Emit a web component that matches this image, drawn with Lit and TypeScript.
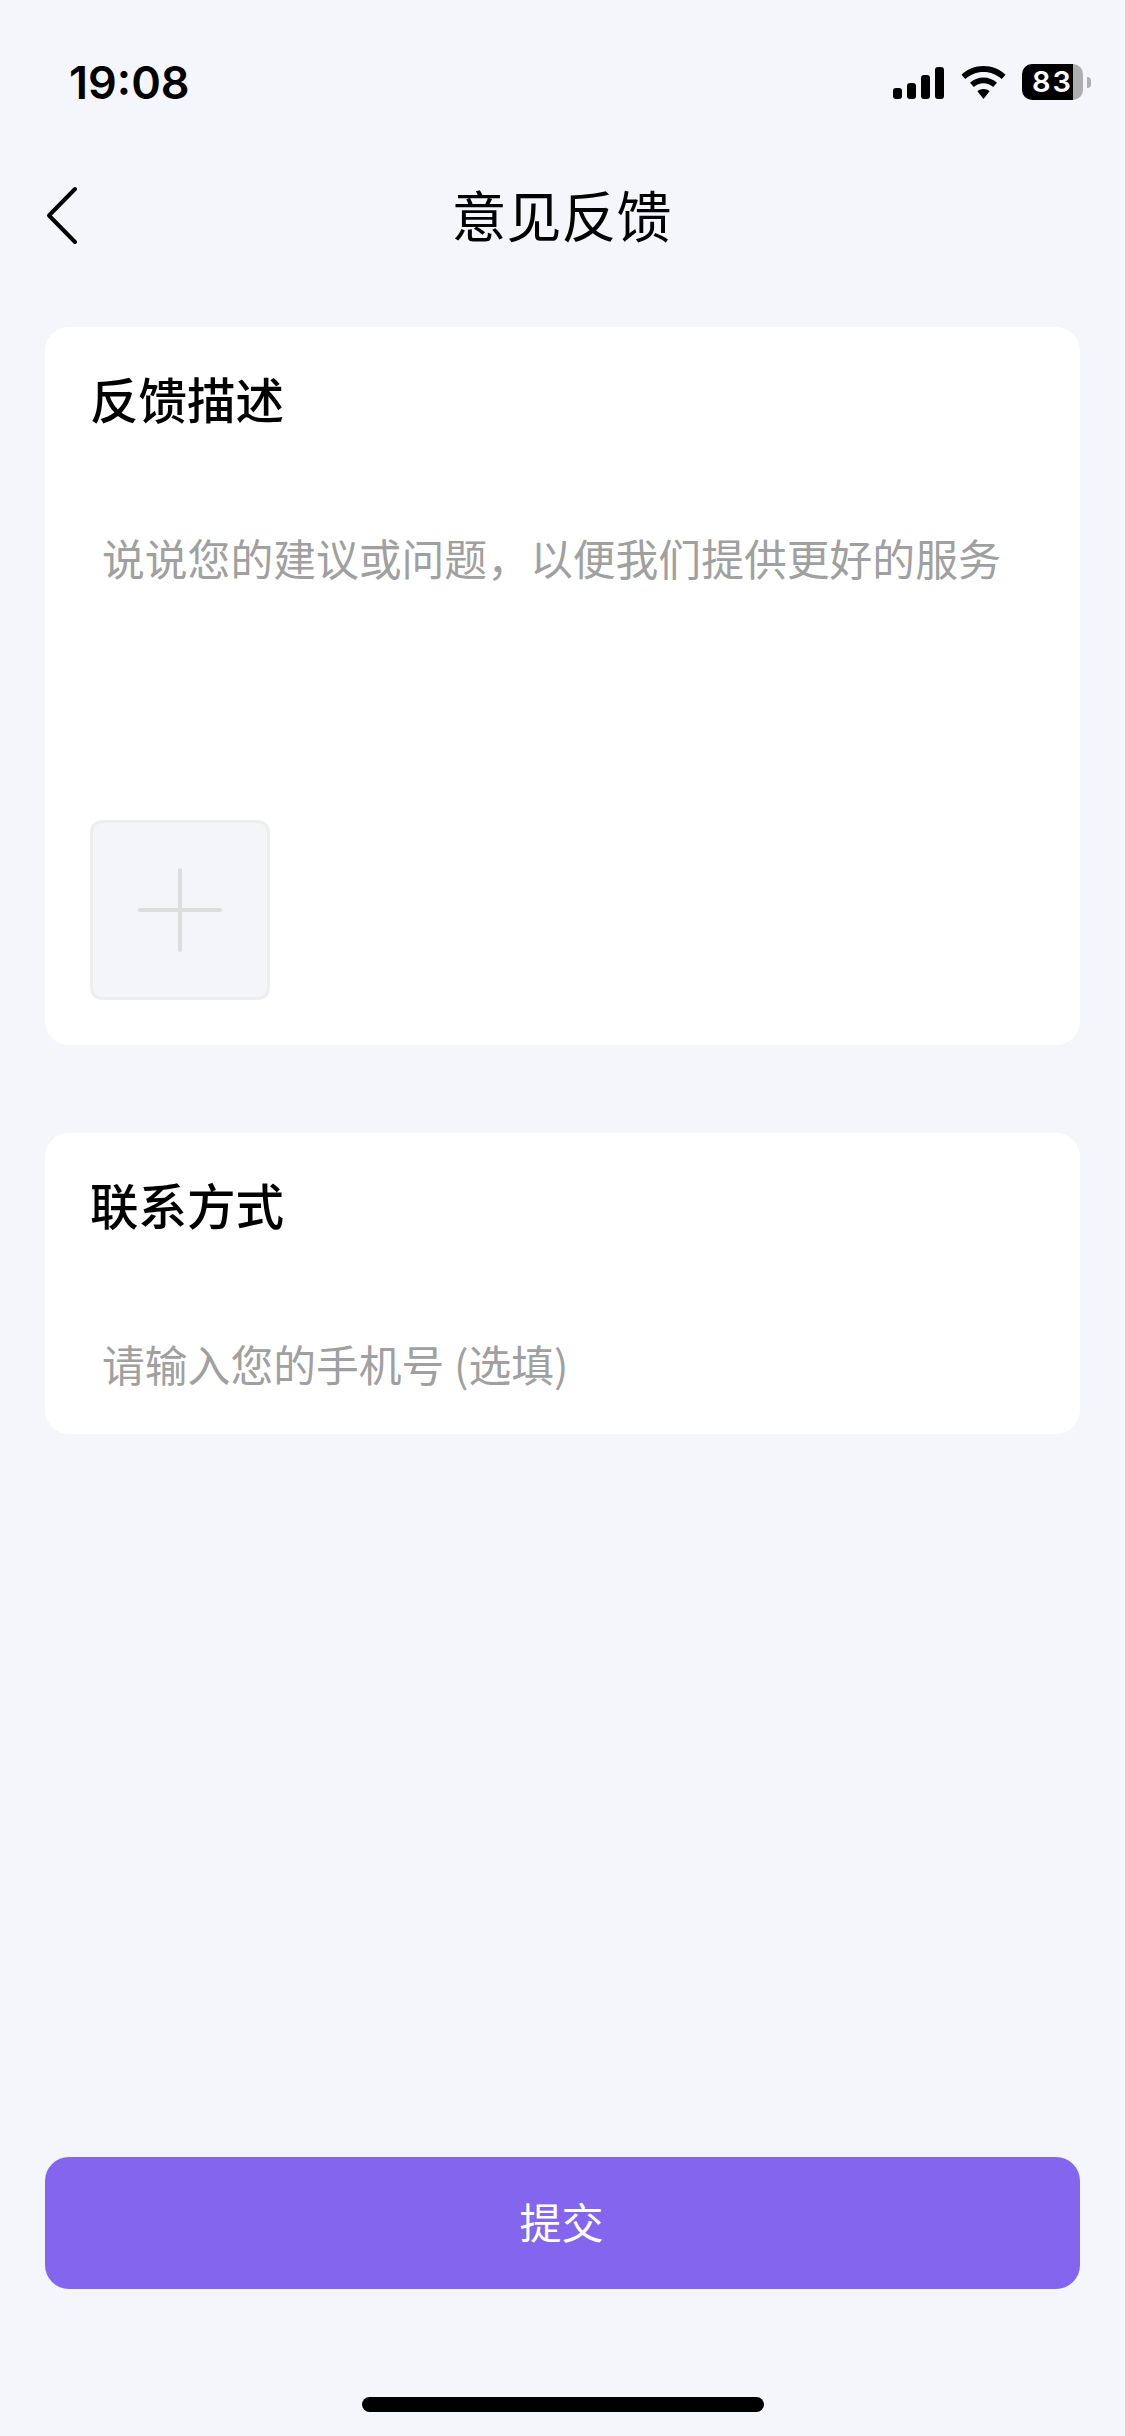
import { LitElement, html, css } from 'lit';
import { customElement } from 'lit/decorators.js';

@customElement('app-root')
export class AppRoot extends LitElement {
  static styles = css`
    :host {
      display: block;
      width: 1125px;
      height: 2436px;
      background: #f5f6fb;
      font-family: 'Noto Sans CJK SC', sans-serif;
      color: #000;
    }
    .page {
      display: flex;
      flex-direction: column;
      height: 100%;
    }
    .status {
      display: flex;
      align-items: center;
      justify-content: space-between;
      height: 164px;
      padding: 0 34px 0 69px;
      box-sizing: border-box;
    }
    .time {
      font-family: Inter, sans-serif;
      font-size: 45px;
      font-weight: 600;
      line-height: 1;
    }
    .indicators {
      display: flex;
      align-items: center;
      gap: 16px;
    }
    .signal {
      display: flex;
      align-items: flex-end;
      gap: 5px;
      height: 33px;
      margin-right: 1px;
    }
    .signal i {
      display: block;
      width: 9px;
      background: #000;
      border-radius: 3px;
    }
    .battery {
      display: flex;
      align-items: center;
    }
    .cell {
      width: 61px;
      height: 36px;
      border-radius: 10px;
      background: linear-gradient(to right, #000 51px, #aeaeb0 51px);
      color: #fff;
      font-family: Inter, sans-serif;
      font-size: 29px;
      font-weight: 600;
      letter-spacing: 2px;
      line-height: 36px;
      padding-left: 10px;
      box-sizing: border-box;
    }
    .nub {
      width: 4px;
      height: 11px;
      margin-left: 4px;
      background: #aeaeb0;
      border-radius: 0 4px 4px 0;
    }
    .nav {
      position: relative;
      display: flex;
      align-items: center;
      justify-content: center;
      height: 104px;
      flex: none;
    }
    .back {
      position: absolute;
      left: 45px;
      top: 20px;
      width: 36px;
      height: 64px;
    }
    .nav h1 {
      margin: 0 2px 6px 0;
      font-size: 55px;
      font-weight: 400;
      line-height: 70px;
    }
    .main {
      display: flex;
      flex-direction: column;
      gap: 88px;
      padding: 59px 45px 0;
    }
    .card {
      background: #fff;
      border-radius: 24px;
      padding: 43px 45px 41px;
    }
    .feedback {
      height: 718px;
      box-sizing: border-box;
      display: flex;
      flex-direction: column;
      padding-bottom: 45px;
    }
    .label {
      font-size: 48.5px;
      font-weight: 500;
      line-height: 56px;
    }
    .hint {
      color: #a0a0a0;
      font-size: 42.8px;
      line-height: 60px;
      padding-left: 12px;
      margin-top: 101px;
      white-space: nowrap;
    }
    .upload {
      width: 180px;
      height: 180px;
      margin-top: auto;
      box-sizing: border-box;
      display: flex;
      align-items: center;
      justify-content: center;
      background: #f4f5f9;
      border: 3px solid #eeeeee;
      border-radius: 12px;
    }
    .footer {
      margin-top: auto;
      padding: 0 45px 24px;
      display: flex;
      flex-direction: column;
      align-items: center;
    }
    .submit {
      width: 100%;
      height: 132px;
      border: none;
      border-radius: 24px;
      background: #8465ee;
      color: #fff;
      font-family: inherit;
      font-size: 42px;
      padding: 0 2px 6px 0;
    }
    .home {
      width: 402px;
      height: 15px;
      margin-top: 108px;
      border-radius: 8px;
      background: #000;
    }
  `;

  render() {
    return html`
      <div class="page">
        <div class="status">
          <div class="time">19:08</div>
          <div class="indicators">
            <div class="signal">
              <i style="height:11px"></i>
              <i style="height:16px"></i>
              <i style="height:24px"></i>
              <i style="height:32px"></i>
            </div>
            <svg width="45" height="33" viewBox="0 0 45 33">
              <path d="M22.5 0C14 0 6.300 3.300 0.500 8.700L4.300 13C9 8.600 15.400 5.900 22.500 5.900S36 8.600 40.700 13L44.500 8.700C38.700 3.300 31 0 22.500 0Z" />
              <path d="M22.500 11.500C17.300 11.500 12.600 13.500 9 16.800L12.800 21.100C15.400 18.800 18.800 17.300 22.500 17.300S29.600 18.800 32.200 21.100L36 16.800C32.400 13.500 27.700 11.500 22.500 11.500Z" />
              <path d="M22.500 23C20.100 23 18 23.900 16.400 25.300L22.500 33L28.600 25.300C27 23.900 24.900 23 22.500 23Z" />
            </svg>
            <div class="battery">
              <div class="cell">83</div>
              <div class="nub"></div>
            </div>
          </div>
        </div>

        <div class="nav">
          <svg class="back" viewBox="0 0 36 64" fill="none" stroke="#000" stroke-width="4" stroke-linecap="round" stroke-linejoin="round">
            <path d="M30 5L4 31.500L30 58" />
          </svg>
          <h1>意见反馈</h1>
        </div>

        <div class="main">
          <section class="card feedback">
            <div class="label">反馈描述</div>
            <div class="hint">说说您的建议或问题，以便我们提供更好的服务</div>
            <div class="upload">
              <svg width="84" height="84" viewBox="0 0 84 84" stroke="#dddddd" stroke-width="4" stroke-linecap="round">
                <path d="M2 42H82M42 2V82" />
              </svg>
            </div>
          </section>
          <section class="card contact">
            <div class="label">联系方式</div>
            <div class="hint">请输入您的手机号 (选填)</div>
          </section>
        </div>

        <div class="footer">
          <button class="submit">提交</button>
          <div class="home"></div>
        </div>
      </div>
    `;
  }
}
